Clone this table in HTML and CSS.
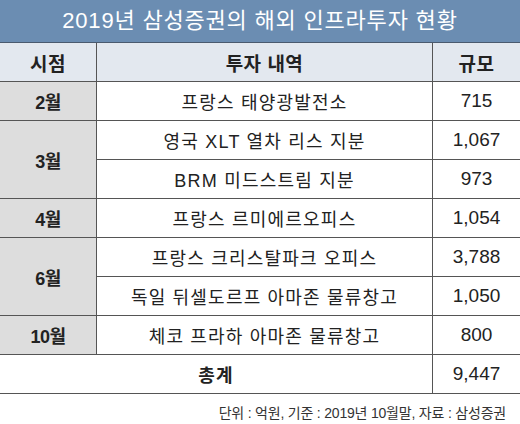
FILE: index.html
```html
<!DOCTYPE html>
<html lang="ko">
<head>
  <meta charset="UTF-8" />
  <title>삼성증권 해외 인프라투자 현황</title>
  <link rel="stylesheet" href="styles.css">
</head>
<body>

  <!-- 제목 -->
  <div class="title">2019년 삼성증권의 해외 인프라투자 현황</div>

  <!-- 표 -->
  <table class="invest">
    <thead>
      <tr>
        <th class="col-month">시점</th>
        <th class="col-item">투자 내역</th>
        <th class="col-size">규모</th>
      </tr>
    </thead>
    <tbody>
      <tr>
        <td class="month">2월</td>
        <td>프랑스 태양광발전소</td>
        <td class="num">715</td>
      </tr>
      <tr>
        <td class="month" rowspan="2">3월</td>
        <td>영국 XLT 열차 리스 지분</td>
        <td class="num">1,067</td>
      </tr>
      <tr>
        <td>BRM 미드스트림 지분</td>
        <td class="num">973</td>
      </tr>
      <tr>
        <td class="month">4월</td>
        <td>프랑스 르미에르오피스</td>
        <td class="num">1,054</td>
      </tr>
      <tr>
        <td class="month" rowspan="2">6월</td>
        <td>프랑스 크리스탈파크 오피스</td>
        <td class="num">3,788</td>
      </tr>
      <tr>
        <td>독일 뒤셀도르프 아마존 물류창고</td>
        <td class="num">1,050</td>
      </tr>
      <tr>
        <td class="month">10월</td>
        <td>체코 프라하 아마존 물류창고</td>
        <td class="num">800</td>
      </tr>
      <tr class="total">
        <td colspan="2">총계</td>
        <td class="num">9,447</td>
      </tr>
    </tbody>
  </table>

  <p class="note">단위 : 억원, 기준 : 2019년 10월말, 자료 : 삼성증권</p>

</body>
</html>
```

FILE: styles.css
```css
/* 기본 */
body {
  margin: 0;
  width: 520px;
  background: #fff;
  color: #222;
  font-family: "Liberation Sans", "Noto Sans CJK KR", sans-serif;
}

/* 제목 */
.title {
  height: 42px;
  line-height: 42px;
  background: #6b8db2;
  color: #fff;
  text-align: center;
  font-size: 22px;
  letter-spacing: 0.8px;
  border-bottom: 1px solid #4a5a6e;
}

/* 표 */
.invest {
  width: 520px;
  border-collapse: collapse;
  table-layout: fixed;
}
.invest th,
.invest td {
  height: 38px;
  padding: 0;
  text-align: center;
  font-size: 18px;
  border-bottom: 1px solid #555;
  border-left: 1px solid #555;
  border-right: 1px solid #555;
}
.invest tr > :first-child {
  border-left: none;
}
.invest tr > :last-child {
  border-right: none;
}
.invest th {
  background: #e3e8ef;
  font-size: 19px;
  font-weight: bold;
  letter-spacing: 0.5px;
}
.col-month {
  width: 96px;
}
.col-size {
  width: 87px;
}
.invest td {
  letter-spacing: 1.2px;
}
.invest td.month {
  background: #dddddd;
  font-weight: bold;
  letter-spacing: -0.5px;
  border-left: none;
}
.invest td.num {
  font-size: 19px;
  letter-spacing: 0;
}
.total td {
  font-weight: bold;
}
.total td.num {
  font-weight: normal;
}

/* 출처 */
.note {
  margin: 0;
  padding: 8px 14px 0 0;
  text-align: right;
  font-size: 14px;
  letter-spacing: -0.2px;
  color: #333;
}
```
